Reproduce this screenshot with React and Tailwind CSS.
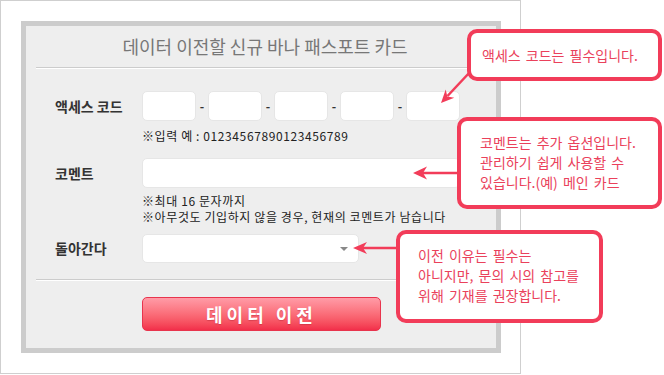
import React from 'react';

const font = { fontFamily: '"Noto Sans CJK KR", "Noto Sans", sans-serif' };

const CodeBox = () => (
  <div className="w-[54px] h-[30px] bg-white rounded-[5px] border border-[#e6e6e6]" />
);

const Callout = ({ className, children }) => (
  <div
    className={`absolute bg-white border-4 border-[#f23c59] rounded-[10px] text-[14px] leading-[20px] text-[#ea415b] [word-spacing:2px] ${className}`}
  >
    {children}
  </div>
);

export default function App() {
  return (
    <div className="relative w-[664px] h-[375px] bg-white" style={font}>
      <div className="w-[521px] h-[374px] border border-[#cfcfcf] pt-[20px] pl-[20px]">
        <div className="w-[480px] h-[332px] border-[5px] border-[#cccccc] bg-[#eeeeee]">
          <div className="h-[41px] flex items-center justify-center text-[18px] text-[#777777] pl-[8px]">
            데이터 이전할 신규 바나 패스포트 카드
          </div>
          <div className="mx-[10px] border-t border-[#cccccc] border-b border-b-white" />

          <div className="pt-[22px]">
            <div className="flex items-center">
              <div className="w-[116px] pl-[29px] text-[14px] font-bold text-[#333333]">액세스 코드</div>
              <div className="flex items-center">
                <CodeBox />
                <span className="w-[12px] text-center text-[12px] font-bold text-[#333333]">-</span>
                <CodeBox />
                <span className="w-[12px] text-center text-[12px] font-bold text-[#333333]">-</span>
                <CodeBox />
                <span className="w-[12px] text-center text-[12px] font-bold text-[#333333]">-</span>
                <CodeBox />
                <span className="w-[12px] text-center text-[12px] font-bold text-[#333333]">-</span>
                <CodeBox />
              </div>
            </div>
            <div className="pl-[116px] mt-[7px] text-[12px] tracking-[0.6px] leading-[16px] text-[#222222]">
              ※입력 예 : 01234567890123456789
            </div>

            <div className="flex items-center mt-[14px]">
              <div className="w-[116px] pl-[29px] text-[14px] font-bold text-[#333333]">코멘트</div>
              <div className="w-[318px] h-[30px] bg-white rounded-[5px] border border-[#e6e6e6]" />
            </div>
            <div className="pl-[116px] mt-[5px] text-[12px] tracking-[0.6px] leading-[16px] text-[#222222]">
              <div>※최대 16 문자까지</div>
              <div>※아무것도 기입하지 않을 경우, 현재의 코멘트가 남습니다</div>
            </div>

            <div className="flex items-center mt-[9px]">
              <div className="w-[116px] pl-[29px] text-[14px] font-bold text-[#333333]">돌아간다</div>
              <div className="w-[217px] h-[29px] bg-white rounded-[5px] border border-[#e6e6e6] flex items-center justify-end pr-[10px]">
                <span className="w-0 h-0 border-l-[4.5px] border-r-[4.5px] border-t-[4px] border-l-transparent border-r-transparent border-t-[#888888]" />
              </div>
            </div>
          </div>

          <div className="mt-[16px] mx-[10px] border-t border-[#cccccc] border-b border-b-white" />

          <div className="mt-[16px] pl-[116px]">
            <button className="w-[239px] h-[34px] rounded-[5px] border border-[#e8344d] bg-gradient-to-b from-[#ff9ba7] to-[#f22e4a] text-white text-[18px] font-bold tracking-[4px] flex items-center justify-center [text-shadow:0_1px_1px_rgba(160,20,40,0.35)]">
              데이터 이전
            </button>
          </div>
        </div>
      </div>

      <Callout className="left-[467px] top-[29px] w-[195px] h-[52px] flex items-center pl-[11px]">
        액세스 코드는 필수입니다.
      </Callout>
      <Callout className="left-[457px] top-[117px] w-[205px] h-[92px] pl-[19px] pt-[11px]">
        <div>코멘트는 추가 옵션입니다.</div>
        <div>관리하기 쉽게 사용할 수</div>
        <div>있습니다.(예) 메인 카드</div>
      </Callout>
      <Callout className="left-[396px] top-[230px] w-[207px] h-[93px] pl-[18px] pt-[11px]">
        <div>이전 이유는 필수는</div>
        <div>아니지만, 문의 시의 참고를</div>
        <div>위해 기재를 권장합니다.</div>
      </Callout>

      <svg className="absolute left-0 top-0 pointer-events-none" width="664" height="375">
        <g fill="#f23c59" stroke="none">
          <polygon points="441,103 454.3,97.8 447.3,96.5 445.7,89.5" />
          <polygon points="413,173 427,166.5 423,173 427,179.5" />
          <polygon points="353,248 367,242 363,248 367,254" />
        </g>
        <g stroke="#f23c59" strokeWidth="2.5" fill="none">
          <line x1="470" y1="72" x2="447.5" y2="96" />
          <line x1="423" y1="173" x2="459" y2="173" />
          <line x1="363" y1="248" x2="398" y2="248" />
        </g>
      </svg>
    </div>
  );
}
